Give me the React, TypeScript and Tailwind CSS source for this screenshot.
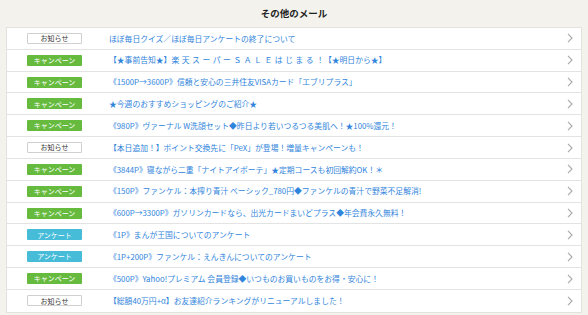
import React from "react";

type Kind = "info" | "camp" | "enq";

const rows: { kind: Kind; text: React.ReactNode }[] = [
  { kind: "info", text: "ほぼ毎日クイズ／ほぼ毎日アンケートの終了について" },
  {
    kind: "camp",
    text: (
      <>
        【★事前告知★】<span className="[word-spacing:0.8px]">楽 天 ス ー パ ー Ｓ Ａ Ｌ Ｅ は じ ま る ！</span>【★明日から★】
      </>
    ),
  },
  { kind: "camp", text: "《1500P→3600P》信頼と安心の三井住友VISAカード「エブリプラス」" },
  { kind: "camp", text: "★今週のおすすめショッピングのご紹介★" },
  { kind: "camp", text: "《980P》ヴァーナル W洗顔セット◆昨日より若いつるつる美肌へ！★100%還元！" },
  { kind: "info", text: "【本日追加！】ポイント交換先に「PeX」が登場！増量キャンペーンも！" },
  { kind: "camp", text: "《3844P》寝ながら二重「ナイトアイボーテ」★定期コースも初回解約OK！＊" },
  { kind: "camp", text: "《150P》ファンケル：本搾り青汁 ベーシック_780円◆ファンケルの青汁で野菜不足解消!" },
  { kind: "camp", text: "《600P→3300P》ガソリンカードなら、出光カードまいどプラス◆年会費永久無料！" },
  { kind: "enq", text: "《1P》まんが王国についてのアンケート" },
  { kind: "enq", text: "《1P+200P》ファンケル：えんきんについてのアンケート" },
  { kind: "camp", text: "《500P》Yahoo!プレミアム 会員登録◆いつものお買いものをお得・安心に！" },
  { kind: "info", text: "【総額40万円+α】お友達紹介ランキングがリニューアルしました！" },
];

function Badge({ kind }: { kind: Kind }) {
  if (kind === "info")
    return (
      <div className="shrink-0 w-[55px] h-[11px] flex items-center justify-center bg-white border border-[#cfcfcf] rounded-[1px] text-[7px] leading-normal text-[#333]">
        お知らせ
      </div>
    );
  if (kind === "camp")
    return (
      <div className="shrink-0 w-[55px] h-[11px] flex items-center justify-center bg-[#66bb3f] rounded-[1px] text-[7px] leading-normal text-white">
        キャンペーン
      </div>
    );
  return (
    <div className="shrink-0 w-[55px] h-[11px] flex items-center justify-center bg-[#46bcd9] rounded-[1px] text-[7px] leading-normal text-white">
      アンケート
    </div>
  );
}

function Chevron() {
  return (
    <svg width="6" height="10" viewBox="0 0 6 10" className="shrink-0">
      <path d="M1 0.8 L5 5 L1 9.2" fill="none" stroke="#a9a9a9" strokeWidth="1.1" />
    </svg>
  );
}

export default function App() {
  return (
    <div
      className="w-[588px] h-[315px] bg-[#f3f2ec] overflow-hidden"
      style={{ fontFamily: '"Noto Sans CJK JP", "Noto Sans", sans-serif' }}
    >
      <div className="h-[27px] flex items-center justify-center pb-[1px]">
        <span className="text-[9.5px] font-bold text-[#222]">その他のメール</span>
      </div>
      <div className="mx-[6px] border border-[#e2e2de] bg-white">
        {rows.map((r, i) => (
          <div
            key={i}
            className={`h-[21.83px] flex items-center pl-[20px] pr-[8px] ${i < rows.length - 1 ? "border-b border-[#e3e3e3]" : ""}`}
          >
            <Badge kind={r.kind} />
            <div className="ml-[27px] flex-1 min-w-0 text-[7.8px] leading-normal text-[#2f84dc] whitespace-nowrap">
              {r.text}
            </div>
            <Chevron />
          </div>
        ))}
      </div>
    </div>
  );
}
